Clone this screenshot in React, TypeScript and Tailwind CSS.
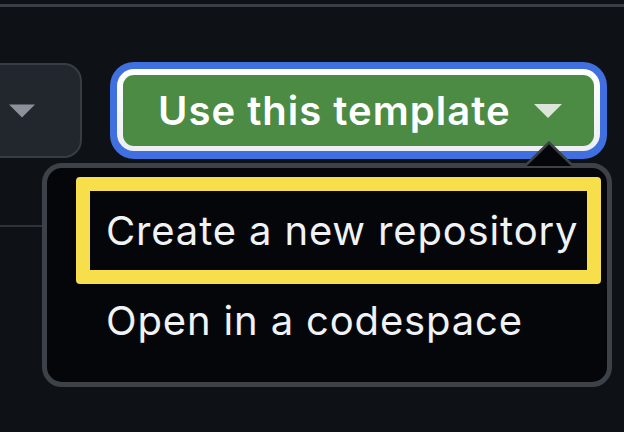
import React from "react";

function Caret({ className }: { className: string }) {
  return (
    <svg viewBox="0 0 28 14" className={className} aria-hidden>
      <polygon points="0,0 28,0 14,14" fill="currentColor" />
    </svg>
  );
}

export default function App() {
  return (
    <div
      className="relative w-[624px] h-[432px] overflow-hidden bg-[#0e1116]"
      style={{ fontFamily: "Inter, 'Liberation Sans', sans-serif" }}
    >
      {/* top edge */}
      <div className="mt-[4px] h-[3px] bg-[#3a3e46]" />

      {/* button row */}
      <div className="mt-[55px] flex items-start">
        <div className="-ml-[20px] mt-[1px] flex h-[95px] w-[102px] items-center justify-end rounded-[18px] border-2 border-[#383c44] bg-[#22262d] pr-[45px]">
          <Caret className="h-[14px] w-[26px] text-[#8d929a]" />
        </div>

        <div className="ml-[28px] w-[497px] rounded-[24px] bg-[#4070e0] p-[7px] pb-[8px]">
          <div className="rounded-[17px] bg-gradient-to-b from-white to-[#eceef2] p-[6px] pb-[5px]">
            <div className="flex h-[71px] items-center rounded-[11px] bg-[#4b8b44] pl-[35px] pr-[32px]">
              <span className="text-[40px] font-semibold leading-none tracking-[1px] text-white">
                Use this template
              </span>
              <Caret className="ml-auto h-[14px] w-[28px] text-[#dbe5da]" />
            </div>
          </div>
        </div>
      </div>

      {/* menu row */}
      <div className="mt-[4px] flex items-start">
        <div className="mt-[62px] h-[2px] w-[42px] bg-[#2f343b]" />
        <div className="h-[224px] w-[570px] rounded-[20px] border-[5px] border-[#3d4249] bg-[#05060a] pl-[29px] pr-[6px] pt-[9px]">
          <div className="flex h-[107px] items-center rounded-[4px] border-[14px] border-[#f6df4a] bg-[#05060a] pl-[16px]">
            <span className="text-[40px] leading-none tracking-[0.85px] text-[#f0f3f6]">Create a new repository</span>
          </div>
          <div className="flex h-[74px] items-center pl-[30px]">
            <span className="text-[40px] leading-none tracking-[0.85px] text-[#f0f3f6]">Open in a codespace</span>
          </div>
        </div>
      </div>

      {/* pointer of the menu */}
      <svg className="absolute left-[525px] top-[141px] h-[25px] w-[48px]" viewBox="0 0 48 25" aria-hidden>
        <polygon points="1,25 24,1.5 47,25" fill="#05060a" />
        <polyline points="1,24 24,1.5 47,24" fill="none" stroke="#3d4249" strokeWidth="2.5" />
      </svg>
    </div>
  );
}
